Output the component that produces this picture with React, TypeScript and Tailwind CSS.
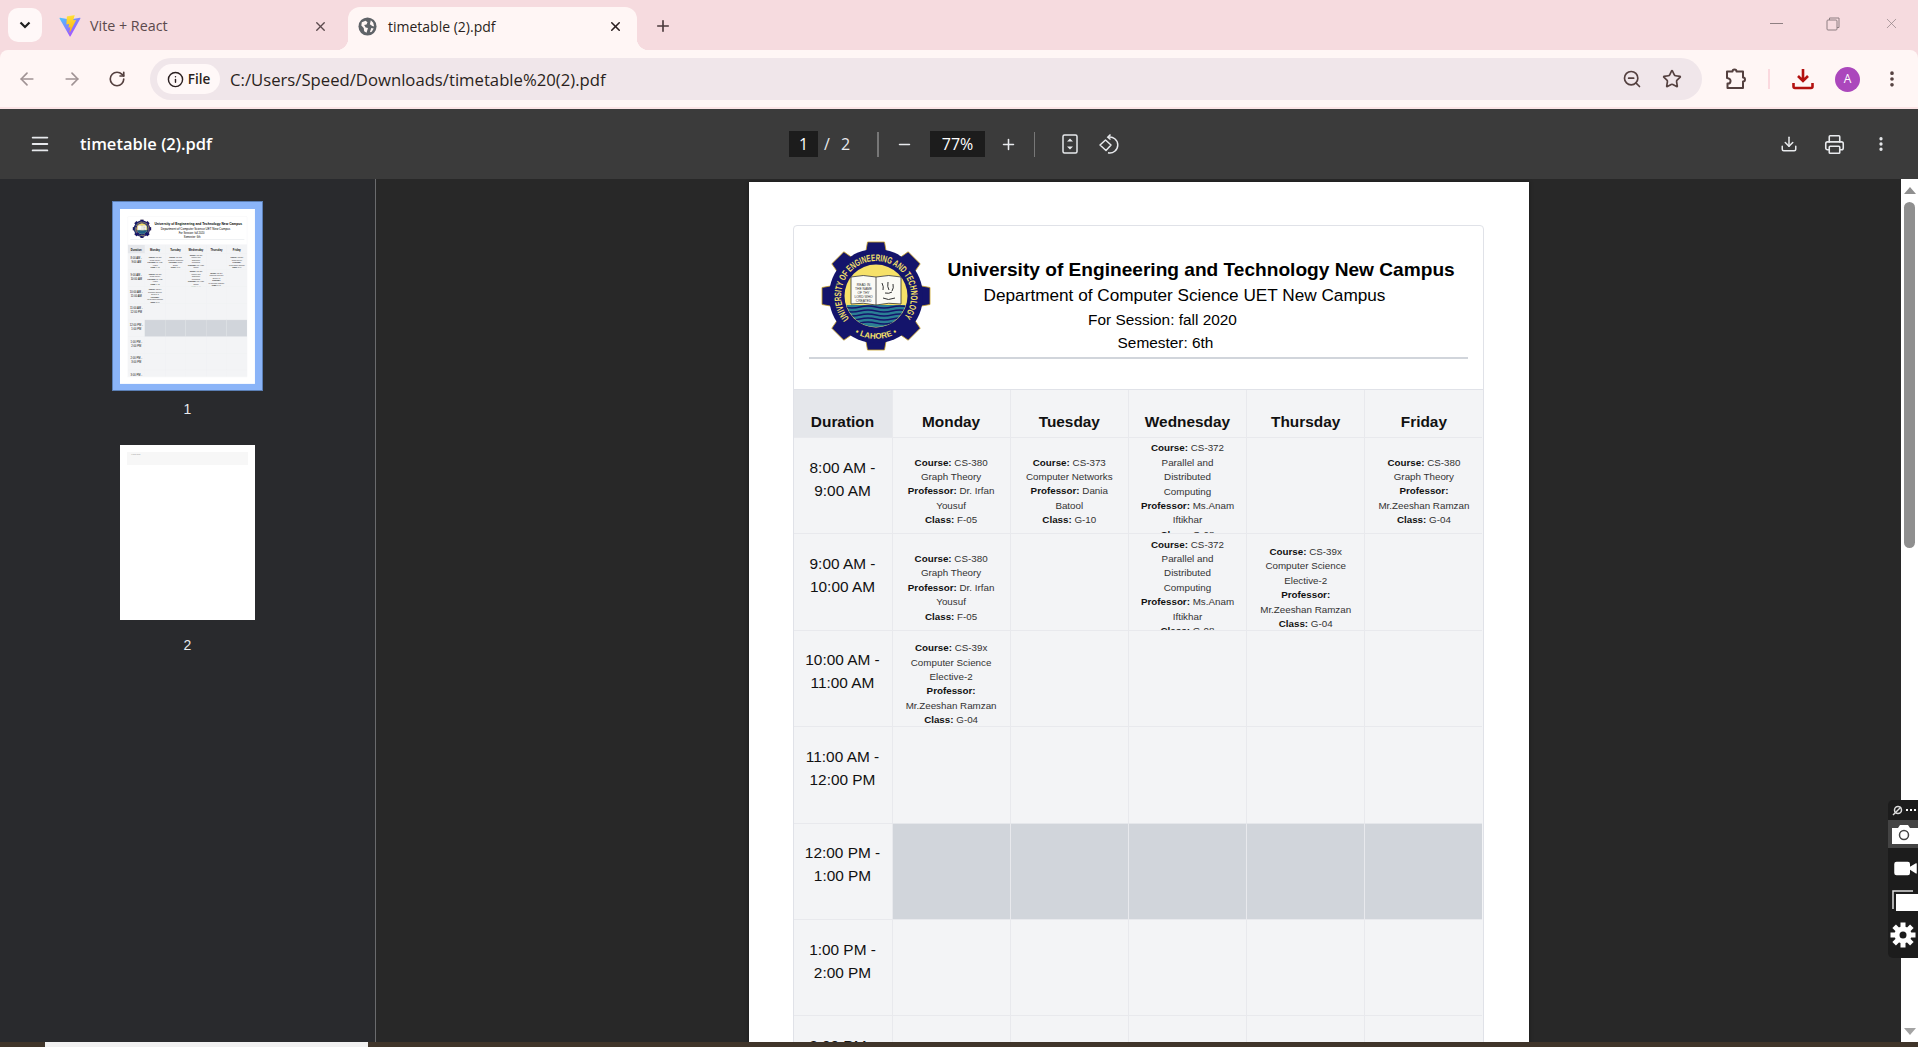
import React from 'react';
import {
  ArrowLeft,
  ArrowRight,
  RotateCw,
  Info,
  ZoomOut,
  Star,
  EllipsisVertical,
  Download,
  Printer,
  Menu,
  Minus,
  Plus,
  X,
  Video,
} from 'lucide-react';

const SANS = { fontFamily: '"Liberation Sans", Arial, sans-serif' };

type Slot = { course: string; title: string[]; prof: string[]; room: string };

const graph: Slot = { course: 'CS-380', title: ['Graph Theory'], prof: ['Dr. Irfan', 'Yousuf'], room: 'F-05' };
const graph2: Slot = { course: 'CS-380', title: ['Graph Theory'], prof: ['', 'Mr.Zeeshan Ramzan'], room: 'G-04' };
const networks: Slot = { course: 'CS-373', title: ['Computer Networks'], prof: ['Dania', 'Batool'], room: 'G-10' };
const parallel: Slot = { course: 'CS-372', title: ['Parallel and', 'Distributed', 'Computing'], prof: ['Ms.Anam', 'Iftikhar'], room: 'G-08' };
const elective: Slot = { course: 'CS-39x', title: ['Computer Science', 'Elective-2'], prof: ['', 'Mr.Zeeshan Ramzan'], room: 'G-04' };

const days = ['Monday', 'Tuesday', 'Wednesday', 'Thursday', 'Friday'];

const rows: { time: [string, string]; cells: (Slot | null)[]; lunch?: boolean }[] = [
  { time: ['8:00 AM -', '9:00 AM'], cells: [graph, networks, parallel, null, graph2] },
  { time: ['9:00 AM -', '10:00 AM'], cells: [graph, null, parallel, elective, null] },
  { time: ['10:00 AM -', '11:00 AM'], cells: [elective, null, null, null, null] },
  { time: ['11:00 AM -', '12:00 PM'], cells: [null, null, null, null, null] },
  { time: ['12:00 PM -', '1:00 PM'], cells: [null, null, null, null, null], lunch: true },
  { time: ['1:00 PM -', '2:00 PM'], cells: [null, null, null, null, null] },
  { time: ['2:00 PM -', '3:00 PM'], cells: [null, null, null, null, null] },
  { time: ['3:00 PM -', '4:00 PM'], cells: [null, null, null, null, null] },
];

const ViteLogo = () => (
  <svg width="24" height="24" viewBox="0 0 32 32" fill="none">
    <defs>
      <linearGradient id="viteA" x1="6" y1="33" x2="235" y2="344" gradientUnits="userSpaceOnUse" gradientTransform="scale(0.1)">
        <stop stopColor="#41D1FF" />
        <stop offset="1" stopColor="#BD34FE" />
      </linearGradient>
      <linearGradient id="viteB" x1="194" y1="8" x2="236" y2="292" gradientUnits="userSpaceOnUse" gradientTransform="scale(0.1)">
        <stop stopColor="#FFEA83" />
        <stop offset="0.08" stopColor="#FFDD35" />
        <stop offset="1" stopColor="#FFA800" />
      </linearGradient>
    </defs>
    <path fill="url(#viteA)" d="M29.8836 6.146L16.7418 29.6457c-.2714.4851-.9684.488-1.2439.0052L2.0956 6.1482c-.3-.5262.1498-1.1635.746-1.057l13.156 2.3516a.7144.7144 0 0 0 .2537-.0004l12.8808-2.3478c.5943-.1083 1.0463.5241.7515 1.0513Z" />
    <path fill="url(#viteB)" d="M21.8257 1.1698 12.1 3.0755a.3572.3572 0 0 0-.288.3295l-.5984 10.1058c-.0141.238.2045.4228.4368.3692l2.7077-.6248c.2533-.0585.4823.1647.4302.4194l-.8044 3.939c-.0542.265.1948.4917.4536.4131l1.6724-.5081c.2592-.0787.5084.1486.4536.4138l-1.2785 6.1881c-.08.3871.4348.5982.6496.2663l.1434-.2215 7.925-15.8157c.1327-.2648-.096-.5667-.3869-.5106l-2.7872.5379c-.2619.0505-.4848-.1934-.4109-.4497l1.8191-6.3056c.074-.2566-.1497-.5007-.4118-.4494Z" />
  </svg>
);

const GlobeIcon = () => (
  <svg width="19" height="19" viewBox="0 0 20 20">
    <circle cx="10" cy="10" r="9.5" fill="#5f6368" />
    <path fill="#fff6f5" d="M4 5.5 8 4l2 1.5-1 2.5-2.5.5L8 11l2.5.5L9 16.5 6.5 15 6 11.5 3.5 9Zm9.5-2L16 6l1 4-2-.5-2.500-2Zm.5 8 2.500.5-2 3.500-2 .5Z" />
  </svg>
);

const ChromeDownload = () => (
  <svg width="22" height="22" viewBox="0 0 22 22" fill="none" stroke="#b3110f" strokeWidth="2.6">
    <path d="M11 1v11M6 8l5 5 5-5" />
    <path d="M1.500 15v3.500a1.500 1.500 0 0 0 1.500 1.500h16a1.500 1.500 0 0 0 1.500-1.500V15" />
  </svg>
);

const ExtensionIcon = () => (
  <svg width="22" height="22" viewBox="0 0 22 22" fill="none" stroke="#54403f" strokeWidth="2" strokeLinejoin="round">
    <path d="M2 3.500h5.500a2 2 0 0 1 4 0H18v6a2 2 0 0 1 0 4V20H2.500v-4.500a2.500 2.500 0 0 0 1-5 2.500 2.500 0 0 0-1.500-.5z" />
  </svg>
);

const FitIcon = () => (
  <svg width="16" height="20" viewBox="0 0 16 20" fill="none">
    <rect x="1" y="1" width="14" height="18" rx="1.500" stroke="#e8eaed" strokeWidth="1.500" />
    <path d="M8 4.500 11 7.500H5ZM8 15.500 5 12.500h6Z" fill="#e8eaed" />
  </svg>
);

const RotateIcon = () => (
  <svg width="22" height="22" viewBox="0 0 22 22" fill="none" stroke="#e8eaed" strokeWidth="1.500">
    <path d="M7.500 7 13 12l-5 5.500L2 12Z" strokeLinejoin="round" />
    <path d="M10 4.200a8 8 0 1 1 0 15.600" />
    <path d="M12.500 1.500 9.800 4.200l2.700 2.300" />
  </svg>
);

const GearIcon = () => (
  <svg width="26" height="26" viewBox="-13 -13 26 26">
    {[0, 45, 90, 135, 180, 225, 270, 315].map((a) => (
      <rect key={a} x="-2.500" y="-12.500" width="5" height="6" fill="#fff" transform={`rotate(${a})`} />
    ))}
    <circle r="8.500" fill="#fff" />
    <circle r="3.500" fill="#1c1c1c" />
  </svg>
);

const UetLogo = () => (
  <svg width="110" height="110" viewBox="-55 -55 110 110" className="shrink-0">
    <defs>
      <clipPath id="uetInner">
        <circle cx="0" cy="0" r="31" />
      </clipPath>
      <path id="uetTop" d="M-26.800 22.500A35 35 0 1 1 26.800 22.500" />
      <path id="uetBottom" d="M-26 34A43 43 0 0 0 26 34" />
    </defs>
    {[0, 45, 90, 135, 180, 225, 270, 315].map((a) => (
      <path key={a} d="M-11-40-8.500-54h17L11-40Z" fill="#14146b" stroke="#c9a227" strokeWidth="0.800" transform={`rotate(${a})`} />
    ))}
    <circle cx="0" cy="0" r="47" fill="#14146b" />
    <circle cx="0" cy="0" r="31.500" fill="#f6e168" />
    <g clipPath="url(#uetInner)">
      <rect x="-32" y="9" width="64" height="24" fill="#2b7f95" />
      {[11, 15, 19, 23, 27].map((y) => (
        <path key={y} d={`M-32 ${y}q8 2 16 0t16 0 16 0 16 0`} fill="none" stroke="#14146b" strokeWidth="1.300" />
      ))}
    </g>
    <path d="M-25-19q12-3 25 0 13-3 25 0V8q-12-2-25 1-13-3-25-1Z" fill="#fafaf5" stroke="#333" strokeWidth="0.800" />
    <path d="M0-19V9" stroke="#333" strokeWidth="0.800" />
    <text x="-12.500" y="-10" textAnchor="middle" fontSize="3.300" fill="#333" style={SANS}>READ IN</text>
    <text x="-12.500" y="-6" textAnchor="middle" fontSize="3.300" fill="#333" style={SANS}>THE NAME</text>
    <text x="-12.500" y="-2" textAnchor="middle" fontSize="3.300" fill="#333" style={SANS}>OF THY</text>
    <text x="-12.500" y="2" textAnchor="middle" fontSize="3.300" fill="#333" style={SANS}>LORD WHO</text>
    <text x="-12.500" y="6" textAnchor="middle" fontSize="3.300" fill="#333" style={SANS}>CREATED</text>
    <path d="M6-13q2 4 1 7M12-14q-1 5 1 8M17-12q1 4-1 7M9-3q4 1 7-1M7 2q5 3 12 0" fill="none" stroke="#333" strokeWidth="1" />
    <text fontSize="9.500" fontWeight="700" fill="#f6e168" style={SANS}>
      <textPath href="#uetTop" textLength="156" lengthAdjust="spacingAndGlyphs">UNIVERSITY OF ENGINEERING AND TECHNOLOGY</textPath>
    </text>
    <text fontSize="8" fontWeight="700" fill="#f6e168" style={SANS} textAnchor="middle">
      <textPath href="#uetBottom" startOffset="50%">• LAHORE •</textPath>
    </text>
  </svg>
);

const SlotCell = ({ slot }: { slot: Slot | null }) => (
  <div className="flex h-full items-center justify-center overflow-hidden border-l border-[#e8e9ed] pt-3 text-center text-[9.800px] leading-[14.400px] text-[#333]">
    {slot && (
      <div className="whitespace-nowrap">
        <div><b className="text-[#111]">Course:</b> {slot.course}</div>
        {slot.title.map((t) => (
          <div key={t}>{t}</div>
        ))}
        <div><b className="text-[#111]">Professor:</b> {slot.prof[0]}</div>
        <div>{slot.prof[1]}</div>
        <div><b className="text-[#111]">Class:</b> {slot.room}</div>
      </div>
    )}
  </div>
);

// The same page is drawn full size in the viewer and shrunk in the thumbnail
const PdfPage = () => (
  <div className="h-[1011px] w-[780px] overflow-hidden bg-white pt-[43px]" style={SANS}>
    <div className="ml-[44px] h-[928px] w-[691px] overflow-hidden rounded-t border border-[#e0e2e8] bg-white">
      <div className="flex h-[131px] items-start pl-[27px] pt-[15px]">
        <UetLogo />
        <div className="ml-[11px] w-[510px] whitespace-nowrap text-center text-black">
          <div className="pl-[6px] pt-[17px] text-[19.130px] font-bold leading-[24px]">University of Engineering and Technology New Campus</div>
          <div className="pr-[24px] pt-[1px] text-[17.200px] leading-[24px]">Department of Computer Science UET New Campus</div>
          <div className="pr-[68px] text-[15.400px] leading-[25px]">For Session: fall 2020</div>
          <div className="pr-[62px] text-[15.400px] leading-[22px]">Semester: 6th</div>
        </div>
      </div>
      <div className="mx-[15px] h-[2px] bg-[#d1d5db]" />
      <div className="mt-[30px] grid grid-cols-[98px_repeat(5,1fr)] auto-rows-[96.400px] grid-rows-[47px] border-t border-[#e0e2e8] bg-[#f3f4f6]">
        <div className="flex items-center justify-center bg-[#e5e7eb] pt-4 text-[15.400px] font-bold text-[#111]">Duration</div>
        {days.map((d) => (
          <div key={d} className="flex items-center justify-center border-l border-[#e8e9ed] pt-4 text-[15.400px] font-bold text-[#111]">{d}</div>
        ))}
        {rows.map((r) => (
          <React.Fragment key={r.time[0]}>
            <div className="flex flex-col items-center justify-center border-t border-[#e8e9ed] pb-[14px] text-[15.400px] leading-[23.100px] text-[#111]">
              <span>{r.time[0]}</span>
              <span>{r.time[1]}</span>
            </div>
            {r.cells.map((c, i) => (
              <div key={i} className={r.lunch ? 'border-t border-[#e5e7eb] bg-[#d1d5db]' : 'overflow-hidden border-t border-[#e8e9ed]'}>
                <SlotCell slot={c} />
              </div>
            ))}
          </React.Fragment>
        ))}
      </div>
    </div>
  </div>
);

const Toolbtn = ({ children, className }: { children: React.ReactNode; className: string }) => (
  <div className={`flex shrink-0 items-center justify-center ${className}`}>{children}</div>
);

export default function App() {
  return (
    <div className="flex h-screen w-full flex-col overflow-hidden bg-[#282828]" style={{ fontFamily: '"Open Sans", "Noto Sans", sans-serif' }}>
      {/* Tab strip */}
      <div className="flex h-[50px] shrink-0 items-end bg-[#f6dbdf]">
        <div className="mb-[8px] ml-[8px] flex h-[34px] w-[34px] items-center justify-center rounded-[10px] bg-[#fff8f8]">
          <svg width="12" height="8" viewBox="0 0 12 8" fill="none" stroke="#1f1f1f" strokeWidth="2.200"><path d="M1.500 1.500 6 6l4.500-4.500" /></svg>
        </div>
        <div className="flex h-[43px] w-[306px] items-center pb-[5px] pl-[16px] pr-[20px]">
          <ViteLogo />
          <span className="ml-[8px] flex-1 text-[14.300px] text-[#5b4a4d]">Vite + React</span>
          <X size={15} strokeWidth={2.200} className="text-[#5b4a4d]" />
        </div>
        <div className="relative flex h-[43px] w-[289px] items-center rounded-t-[12px] bg-[#fff6f5] pb-[5px] pl-[10px] pr-[14px]">
          <div className="absolute bottom-0 left-[-12px] h-[12px] w-[12px] bg-[radial-gradient(circle_at_top_left,transparent_12px,#fff6f5_12.500px)]" />
          <div className="absolute bottom-0 right-[-12px] h-[12px] w-[12px] bg-[radial-gradient(circle_at_top_right,transparent_12px,#fff6f5_12.500px)]" />
          <GlobeIcon />
          <span className="ml-[11px] flex-1 text-[14px] text-[#2a1f20]">timetable (2).pdf</span>
          <X size={15} strokeWidth={2.500} className="text-[#2a1f20]" />
        </div>
        <Plus size={18} strokeWidth={2.200} className="mb-[15px] ml-[17px] text-[#4a3a3c]" />
        <div className="flex-1" />
        <div className="mb-[18px] flex items-center">
          <div className="h-px w-[13px] bg-[#8e7f82]" />
          <svg width="14" height="14" viewBox="0 0 14 14" fill="none" stroke="#8e7f82" className="ml-[43px]"><rect x="1" y="3" width="10" height="10" rx="1" /><path d="M3.500 3V1H13v9.500h-2" /></svg>
          <X size={17} strokeWidth={1} className="ml-[43px] mr-[18px] text-[#8e7f82]" />
        </div>
      </div>

      {/* Address bar */}
      <div className="h-[59px] shrink-0 bg-[#f6dbdf]">
        <div className="flex h-full items-center rounded-t-[8px] border-b-2 border-[#fbe4e6] bg-[#fff6f5] pt-[1px]">
          <ArrowLeft size={20} className="ml-[17px] text-[#a09394]" />
          <ArrowRight size={20} className="ml-[25px] text-[#a09394]" />
          <RotateCw size={18} strokeWidth={2.200} className="ml-[26px] text-[#54403f]" />
          <div className="ml-[24px] flex h-[42px] w-[1552px] items-center rounded-full bg-[#f0e6ea] pl-[7px]">
            <div className="flex h-[30px] w-[63px] items-center justify-center gap-[4px] rounded-full bg-[#fff8f8] text-[13.500px] font-semibold text-[#2a1f20]">
              <Info size={17} strokeWidth={2} />
              File
            </div>
            <span className="ml-[10px] flex-1 pt-[2px] text-[16.700px] text-[#2a1f20]">C:/Users/Speed/Downloads/timetable%20(2).pdf</span>
            <ZoomOut size={20} strokeWidth={2} className="text-[#54403f]" />
            <Star size={20} strokeWidth={2} className="ml-[20px] mr-[20px] text-[#54403f]" />
          </div>
          <div className="ml-[23px]"><ExtensionIcon /></div>
          <div className="ml-[21px] h-[20px] w-[2px] bg-[#fbd9df]" />
          <div className="ml-[22px]"><ChromeDownload /></div>
          <div className="ml-[21px] flex h-[25px] w-[25px] items-center justify-center rounded-full bg-[#ab47bc] text-[12px] text-white">A</div>
          <EllipsisVertical size={20} strokeWidth={2.400} className="ml-[22px] text-[#54403f]" />
        </div>
      </div>

      {/* PDF viewer toolbar */}
      <div className="flex h-[70px] shrink-0 items-center bg-[#3b3b3b] text-[#e8eaed]">
        <Menu size={22} strokeWidth={2} className="ml-[29px]" />
        <span className="ml-[29px] w-[709px] text-[16.500px] font-semibold text-white">timetable (2).pdf</span>
        <Toolbtn className="h-[26px] w-[29px] bg-[#1c1c1c] text-[16px] text-white">1</Toolbtn>
        <span className="ml-[6px] text-[16px]">/</span>
        <span className="ml-[11px] text-[16px]">2</span>
        <div className="ml-[27px] h-[25px] w-[2px] bg-[#777]" />
        <Minus size={17} strokeWidth={2.200} className="ml-[17px]" />
        <Toolbtn className="ml-[17px] h-[26px] w-[55px] bg-[#1c1c1c] text-[16px] text-white">77%</Toolbtn>
        <Plus size={17} strokeWidth={2.200} className="ml-[15px]" />
        <div className="ml-[17px] h-[25px] w-px bg-[#777]" />
        <div className="ml-[27px]"><FitIcon /></div>
        <div className="ml-[20px]"><RotateIcon /></div>
        <div className="flex-1" />
        <Download size={18} strokeWidth={2} />
        <Printer size={21} strokeWidth={1.800} className="ml-[26px]" />
        <EllipsisVertical size={18} strokeWidth={2.400} className="ml-[27px] mr-[28px]" />
      </div>

      {/* Viewer body */}
      <div className="relative flex min-h-0 flex-1">
        <aside className="w-[376px] shrink-0 border-r border-[#6a6b6d] bg-[#292a2d] pt-[22px]" style={SANS}>
          <div className="ml-[112px] h-[190px] w-[151px] border border-[#5b7fb5] bg-[#8ab4f8] p-[7px]">
            <div className="h-[175px] w-[135px] overflow-hidden">
              <div className="origin-top-left scale-[0.173]"><PdfPage /></div>
            </div>
          </div>
          <div className="ml-[112px] mt-[8px] w-[151px] text-center text-[14px] text-[#e8eaed]">1</div>
          <div className="ml-[120px] mt-[25px] h-[175px] w-[135px] bg-white px-[7px] pt-[7px]">
            <div className="h-[13px] bg-[#f7f7f7] pl-[4px] text-[2.500px] leading-[6px] text-[#888]">4:00 PM</div>
          </div>
          <div className="ml-[112px] mt-[15px] w-[151px] text-center text-[14px] text-[#e8eaed]">2</div>
        </aside>

        <main className="flex min-w-0 flex-1 justify-center overflow-hidden bg-[#282828] pt-[3px]">
          <div className="h-fit shrink-0 shadow-[0_0_4px_rgba(0,0,0,0.4)]"><PdfPage /></div>
        </main>

        {/* Scrollbar */}
        <div className="flex w-[17px] shrink-0 flex-col items-center bg-white">
          <div className="mt-[8px] h-0 w-0 border-x-[6px] border-b-[7px] border-x-transparent border-b-[#8f8f8f]" />
          <div className="mt-[8px] h-[346px] w-[11px] rounded-t-full rounded-b-full bg-[#8f8f8f]" />
          <div className="flex-1" />
          <div className="mb-[7px] h-0 w-0 border-x-[6px] border-t-[7px] border-x-transparent border-t-[#a3a3a3]" />
        </div>

        {/* Capture widget floating over the page edge */}
        <div className="absolute right-0 top-[621px] flex h-[158px] w-[30px] flex-col items-start overflow-hidden rounded-l-[5px] bg-[#1c1c1c]">
          <div className="flex h-[20px] items-center pl-[4px] text-white">
            <svg width="11" height="11" viewBox="0 0 11 11" fill="none" stroke="#ddd" strokeWidth="1.500"><circle cx="6" cy="5" r="3.500" /><path d="M1 10l8-8" /></svg>
            <span className="ml-[3px] flex gap-[2px]">
              <span className="h-[2px] w-[2px] bg-white" />
              <span className="h-[2px] w-[2px] bg-white" />
              <span className="h-[2px] w-[2px] bg-white" />
            </span>
          </div>
          <div className="flex h-[28px] w-full items-center bg-[#444] pl-[3px]">
            <svg width="27" height="20" viewBox="0 0 27 20" className="shrink-0">
              <path fill="#fff" d="M1 4h6l2-3h8l2 3h8v16H1Z" />
              <circle cx="13" cy="11" r="4.500" fill="none" stroke="#444" strokeWidth="1.500" />
            </svg>
          </div>
          <div className="mt-[7px] pl-[4px]">
            <Video size={27} fill="#fff" strokeWidth={0} className="shrink-0" />
          </div>
          <div className="mt-[8px] pl-[4px]">
            <svg width="26" height="21" viewBox="0 0 26 21" className="shrink-0">
              <path fill="none" stroke="#ddd" strokeWidth="1.500" d="M1 19V1h20" />
              <rect x="4" y="4" width="22" height="17" fill="#fff" />
            </svg>
          </div>
          <div className="mt-[11px] pl-[2px]"><GearIcon /></div>
        </div>
      </div>

      {/* Strip of the window behind */}
      <div className="flex h-[5px] shrink-0 bg-[#40352a]">
        <div className="ml-[45px] w-[323px] bg-[#f1f1f1]" />
      </div>
    </div>
  );
}
